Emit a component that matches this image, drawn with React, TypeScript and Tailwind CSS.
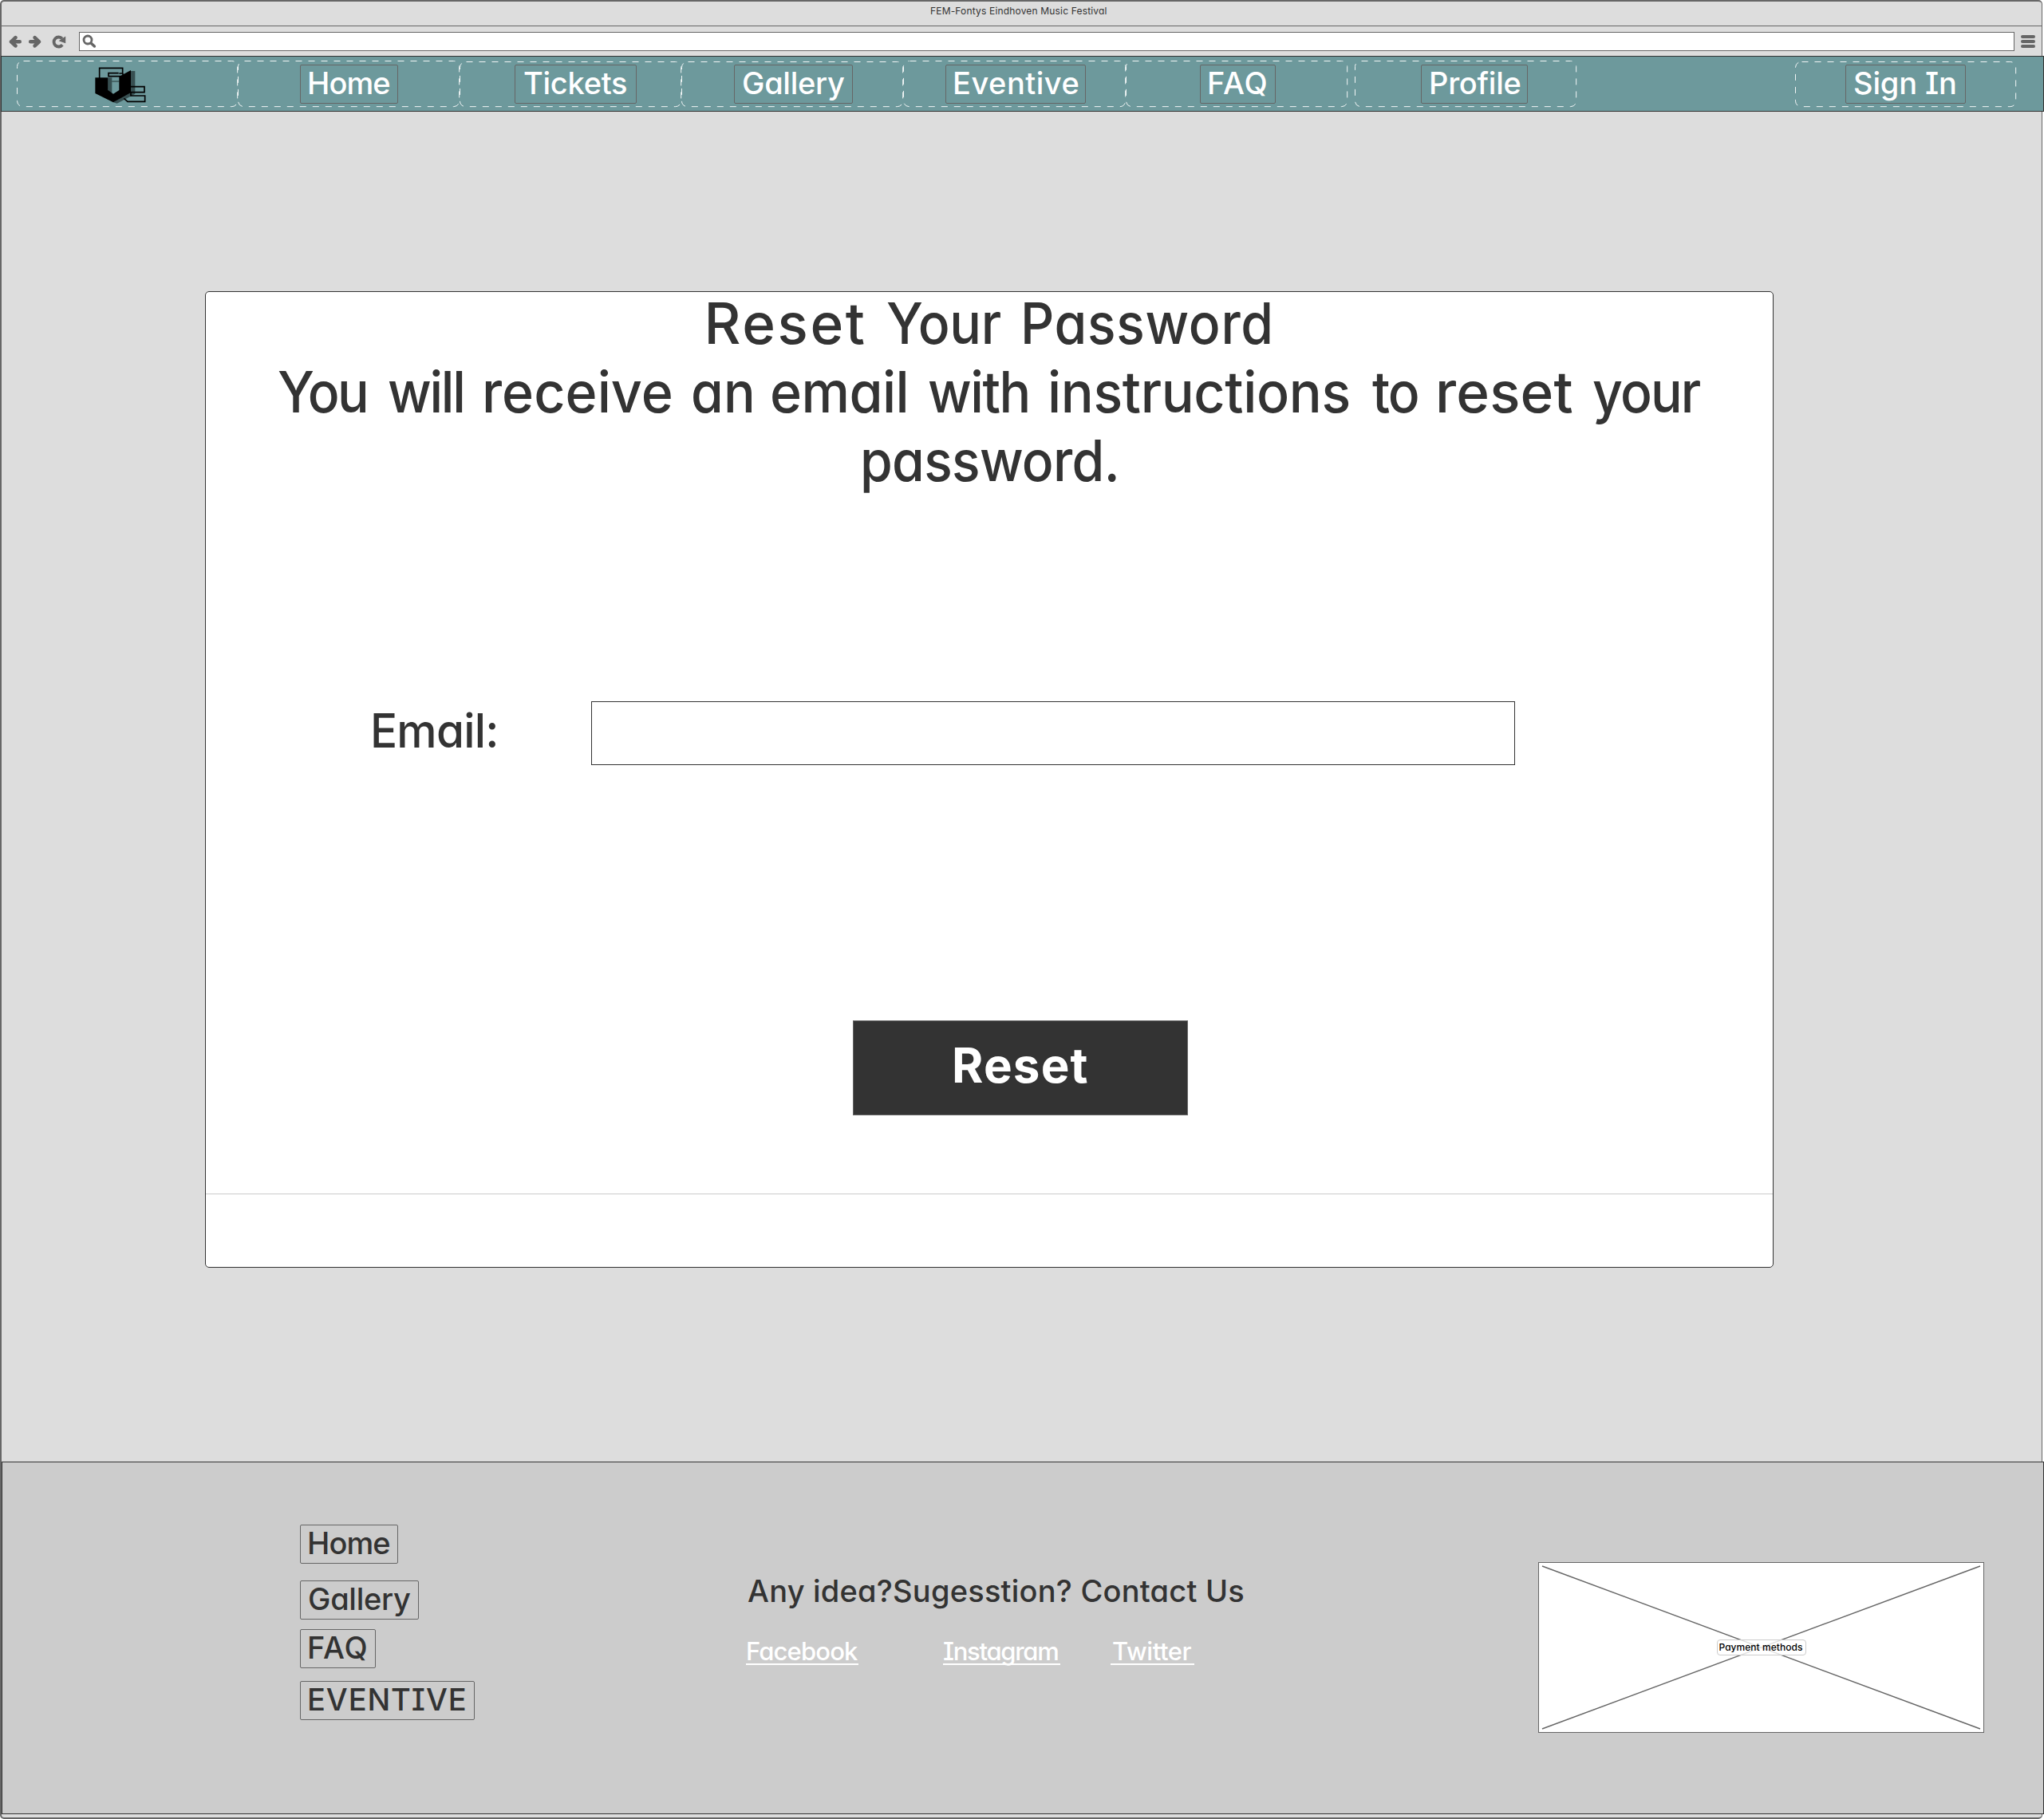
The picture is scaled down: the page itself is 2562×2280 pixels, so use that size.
import type { ReactNode } from "react";

function Txt({ t, className }: { t: string; className: string }) {
  return <span className={`block whitespace-nowrap ${className}`}>{t}</span>;
}

function Word({ t, className }: { t: string; className: string }) {
  return <span className={`block shrink-0 origin-left whitespace-pre ${className}`}>{t + " "}</span>;
}

function Slot({ className, children }: { className: string; children?: ReactNode }) {
  return (
    <div className={`relative flex shrink-0 ${className}`}>
      <svg className="absolute inset-0 h-full w-full overflow-visible" fill="none">
        <rect x="0.5" y="0.5" width="99.7%" height="98.5%" rx="7" stroke="#fff" strokeOpacity="0.9" strokeDasharray="8 8" strokeDashoffset="-1" />
      </svg>
      {children}
    </div>
  );
}

function Box({ className, children }: { className: string; children: ReactNode }) {
  return (
    <a className={`relative block h-[49px] shrink-0 rounded-[2px] border border-[#666] text-[38px] leading-[44px] font-medium ${className}`}>
      {children}
    </a>
  );
}

function Logo() {
  return (
    <svg className="relative ml-[96px] mt-[6px] h-[49px] w-[66px]" viewBox="350 245 198 147" fill="none">
      <path d="M405 291h15v62l-15-8zM491 266h16v86l-68 36-14-4 66-40z" fill="#374f51" />
      <path d="M373 294v-39h87v20h-13M461 275v11h-54v-12h38" stroke="#000" strokeWidth="5" />
      <path d="M420 305h27" stroke="#000" strokeWidth="2" />
      <path d="M357 291h48v47l20 14 22-14v-51l44-24v84l-66 37-68-34z" fill="#000" />
      <path d="M491 325h51v21h-51v13h53v22h-65l-14-12" stroke="#000" strokeWidth="5" />
    </svg>
  );
}

export default function App() {
  return (
    <div className="h-[2280px] w-[2562px] overflow-hidden bg-white font-['Inter',sans-serif] text-[#333] [font-feature-settings:'cv11','cv08']">
      <div className="h-[2280px] w-[2560px] rounded-[5px] border-2 border-r border-[#666] bg-[#ddd]">
        <header>
          <div className="flex h-[31px] items-start border-b border-[#666] pl-[1164px]">
            <Txt t="FEM-Fontys Eindhoven Music Festival" className="text-[12px] leading-[23px] tracking-[0.17px]" />
          </div>
          <div className="flex h-[37px] items-center pl-[9px]">
            <svg className="h-[24px] w-[88px] shrink-0" viewBox="11 40 88 24" fill="none" stroke="#666" strokeWidth="4.6" strokeLinecap="round" strokeLinejoin="round">
              <path d="M14 52.3h10.7M19.4 47.2l-5.4 5.1 5.4 5.1" />
              <path d="M38.2 52.3h10.7M43.6 47.2l5.4 5.1-5.4 5.1" />
              <path d="M78.2 56.3A6 6 0 1 1 77.9 48.4" strokeWidth="3.8" strokeLinecap="butt" />
              <path d="M82.2 45.4v8.8l-8.6-3z" fill="#666" stroke="none" />
            </svg>
            <div className="flex h-[24px] w-[2426px] items-center border border-[#666] bg-white pl-[3px]">
              <svg className="h-[18px] w-[18px]" viewBox="103 44 18 18" fill="none" stroke="#666">
                <circle cx="110" cy="51" r="5" strokeWidth="2.8" />
                <path d="M114 55l4.4 4" strokeWidth="3.4" strokeLinecap="round" />
              </svg>
            </div>
            <div className="ml-[8px] flex w-[18px] flex-col gap-[2px]">
              <span className="h-[4px] rounded-[2px] bg-[#666]" />
              <span className="h-[4px] rounded-[2px] bg-[#666]" />
              <span className="h-[4px] rounded-[2px] bg-[#666]" />
            </div>
          </div>
        </header>

        <nav className="-ml-px flex h-[70px] w-[2561px] items-start border border-[#333] bg-[#6d999c] pl-[19px] pt-[5px] text-white">
          <Slot className="h-[58px] w-[277px]"><Logo /></Slot>
          <Slot className="h-[58px] w-[278px]"><Box className="ml-[78px] mt-[5px] w-[123px] pl-[8px]"><Txt t="Home" className="tracking-[-0.9px]" /></Box></Slot>
          <Slot className="mt-px h-[57px] w-[278px]"><Box className="ml-[69px] mt-[4px] w-[153px] pl-[10px]"><Txt t="Tickets" className="tracking-[-0.27px]" /></Box></Slot>
          <Slot className="mt-px h-[57px] w-[278px]"><Box className="ml-[66px] mt-[4px] w-[149px] pl-[9px]"><Txt t="Gallery" className="tracking-[-0.28px]" /></Box></Slot>
          <Slot className="h-[58px] w-[279px]"><Box className="ml-[53px] mt-[5px] w-[176px] pl-[8px]"><Txt t="Eventive" className="tracking-[0.52px]" /></Box></Slot>
          <Slot className="h-[58px] w-[278px]"><Box className="ml-[93px] mt-[5px] w-[95px] pl-[8px]"><Txt t="FAQ" className="tracking-[1px]" /></Box></Slot>
          <Slot className="ml-[9px] h-[58px] w-[278px]"><Box className="ml-[83px] mt-[5px] w-[134px] pl-[9px]"><Txt t="Profile" className="tracking-[-0.25px]" /></Box></Slot>
          <Slot className="ml-[274px] mt-px h-[57px] w-[277px]"><Box className="ml-[63px] mt-[4px] w-[151px] pl-[9px]"><Txt t="Sign In" className="tracking-[-0.15px]" /></Box></Slot>
        </nav>

        <main className="flex h-[1692px] flex-col pl-[255px] pt-[225px]">
          <section className="flex h-[1224px] w-[1966px] flex-col rounded-[5px] border border-[#333] bg-white">
            <div className="-mt-[4px] flex h-[258px] flex-col text-[71px] leading-[86px] font-medium">
              <h1 className="flex pl-[624.5px]">
                <Word t="Reset" className="w-[228.3px] tracking-[2.66px]" />
                <Word t="Your" className="w-[168.5px] scale-x-[0.93] tracking-[-0.4px]" />
                <Word t="Password" className="w-[320px] scale-x-[0.93] tracking-[0.71px]" />
              </h1>
              <p className="flex pl-[90px]">
                <Word t="You" className="w-[138.4px] scale-x-[0.93] tracking-[-2.7px]" />
                <Word t="will" className="w-[118px] scale-x-[0.93] tracking-[-2.46px]" />
                <Word t="receive" className="w-[261.8px] scale-x-[0.96] tracking-[0.04px]" />
                <Word t="an" className="w-[98.9px] scale-x-[0.93] tracking-[0.17px]" />
                <Word t="email" className="w-[198px] scale-x-[0.96] tracking-[-0.62px]" />
                <Word t="with" className="w-[150.2px] scale-x-[0.93] tracking-[-1.57px]" />
                <Word t="instructions" className="w-[407px] scale-x-[0.96] tracking-[-0.36px]" />
                <Word t="to" className="w-[78.7px] scale-x-[0.93] tracking-[-2.2px]" />
                <Word t="reset" className="w-[196.9px] tracking-[0.2px]" />
                <Word t="your" className="w-[150px] scale-x-[0.93] tracking-[-1.96px]" />
              </p>
              <p className="flex pl-[820px]">
                <Word t="password." className="w-[340px] scale-x-[0.93] tracking-[-0.76px]" />
              </p>
            </div>
            <label className="mt-[259px] flex h-[80px] pl-[205px]">
              <span className="w-[278px]"><Txt t="Email:" className="origin-left scale-x-[0.96] pl-px text-[59px] leading-[73px] font-medium tracking-[-0.8px]" /></span>
              <span className="h-[80px] w-[1158px] border border-[#333]" />
            </label>
            <button className="ml-[811px] mt-[320px] flex h-[119px] w-[420px] border border-[#666] bg-[#333] pl-[123px] text-[60px] leading-[110px] font-bold text-white">
              <Txt t="Reset" className="tracking-[1.21px]" />
            </button>
            <div className="mt-[98px] h-[91px] border-t border-[#ccc]" />
          </section>
        </main>

        <footer className="flex h-[442px] w-[2560px] items-start border border-[#333] bg-[#ccc]">
          <div className="ml-[373px] flex w-[559px] flex-col items-start pt-[78px]">
            <Box className="w-[123px] pl-[8px]"><Txt t="Home" className="tracking-[-0.9px]" /></Box>
            <Box className="mt-[21px] w-[149px] pl-[9px]"><Txt t="Gallery" className="tracking-[-0.28px]" /></Box>
            <Box className="mt-[12px] w-[95px] pl-[8px]"><Txt t="FAQ" className="tracking-[1px]" /></Box>
            <Box className="mt-[16px] w-[219px] pl-[8px]"><Txt t="EVENTIVE" className="tracking-[0.9px]" /></Box>
          </div>
          <div className="w-[993px] pt-[137px] font-medium">
            <p className="pl-[2px] text-[38px] leading-[48px]"><Txt t="Any idea?Sugesstion? Contact Us" className="tracking-[0.22px]" /></p>
            <div className="mt-[33px] flex text-[31px] leading-[38px] text-white">
              <a className="mr-[106px] h-[36px] w-[141px] border-b-2 border-white"><Txt t="Facebook" className="tracking-[-0.86px]" /></a>
              <a className="mr-[63px] h-[36px] w-[147px] border-b-2 border-white"><Txt t="Instagram" className="tracking-[-1.29px]" /></a>
              <a className="h-[36px] w-[105px] border-b-2 border-white pl-[2px]"><Txt t="Twitter" className="tracking-[-0.39px]" /></a>
            </div>
          </div>
          <div className="relative mt-[125px] flex h-[214px] w-[559px] items-center justify-center border border-[#666] bg-white">
            <svg className="absolute inset-0 h-full w-full" viewBox="0 0 557 212" stroke="#666" strokeWidth="1.4">
              <path d="M4 4L553 208M553 4L4 208" />
            </svg>
            <div className="relative flex h-[20px] w-[112px] rounded-[4px] border border-[#ccc] bg-white/80 pl-[2px] text-[12px] leading-[17px] font-medium text-black">
              <Txt t="Payment methods" className="tracking-[0.04px]" />
            </div>
          </div>
        </footer>
      </div>
    </div>
  );
}
